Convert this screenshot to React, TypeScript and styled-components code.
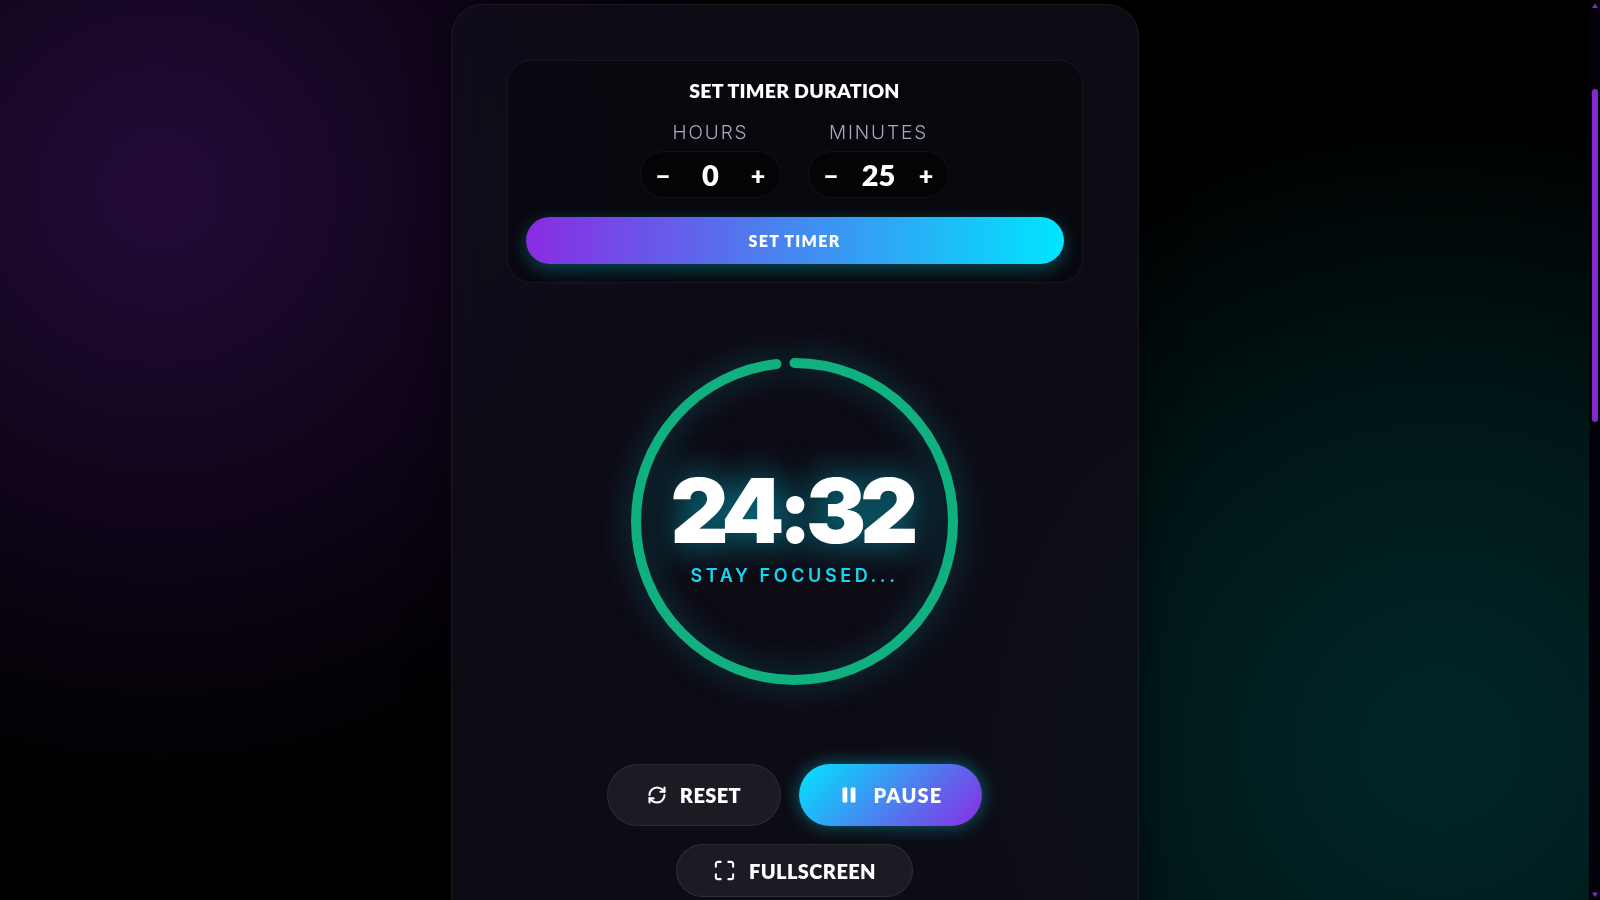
import React, { useLayoutEffect, useRef } from "react";
import styled, { createGlobalStyle } from "styled-components";
import { RefreshCw, Maximize } from "lucide-react";

const Global = createGlobalStyle`
  html, body { margin: 0; height: 100%; background: #000; overflow: hidden; }
  body { color: #fff; font-family: "Lato", "Inter", sans-serif; }
  #root { height: 100%; }
`;

const Backdrop = styled.div`
  position: fixed;
  inset: 0;
  z-index: 0;
  background:
    radial-gradient(circle at 10% 21%, rgba(138, 43, 226, 0.25), transparent 600px),
    radial-gradient(circle at 90% 83%, rgba(0, 229, 235, 0.17), rgba(0, 229, 235, 0.11) 300px, transparent 640px),
    #000;
`;

const Scroller = styled.div`
  position: relative;
  z-index: 1;
  height: 100vh;
  overflow-y: scroll;
  scrollbar-width: none;
`;

const Rail = styled.div`
  position: fixed;
  top: 0;
  right: 0;
  bottom: 0;
  z-index: 2;
  width: 11px;
  background: #030208;
  display: flex;
  flex-direction: column;
  align-items: center;
`;

const RailArrow = styled.svg`
  flex: none;
  display: block;
  width: 11px;
  height: 12px;
  fill: #8428d0;
`;

const RailTrack = styled.div`
  flex: 1;
  width: 100%;
`;

const RailThumb = styled.div`
  width: 6px;
  height: 333px;
  margin: 77px 2px 0 3px;
  border-radius: 3px;
  background: #8428d0;
`;

const Page = styled.main`
  display: flex;
  flex-direction: column;
  align-items: center;
  box-sizing: border-box;
  min-height: 2375px;
  padding: 213px 11px 0 0;
`;

const Card = styled.section`
  box-sizing: border-box;
  width: 688px;
  padding: 55px 55px 56px;
  border: 1px solid rgba(255, 255, 255, 0.06);
  border-radius: 32px;
  background: rgba(16, 14, 25, 0.8);
  backdrop-filter: blur(20px);
  box-shadow: 0 0 40px rgba(0, 0, 0, 0.5);
  display: flex;
  flex-direction: column;
  align-items: center;
`;

const Panel = styled.div`
  box-sizing: border-box;
  width: 100%;
  padding: 18px;
  border: 1px solid rgba(255, 255, 255, 0.06);
  border-radius: 24px;
  background: rgba(0, 0, 0, 0.32);
  display: flex;
  flex-direction: column;
  align-items: center;
`;

const Title = styled.h2`
  margin: 0;
  font-size: 19.5px;
  line-height: 24px;
  font-weight: 800;
  letter-spacing: 0.25px;
  color: #fff;
`;

const Fields = styled.div`
  display: flex;
  gap: 27px;
  margin-top: 19px;
`;

const Field = styled.div`
  display: flex;
  flex-direction: column;
  align-items: center;
  gap: 7px;
`;

const FieldLabel = styled.span`
  font-family: "Inter", sans-serif;
  font-size: 19px;
  line-height: 22px;
  font-weight: 300;
  letter-spacing: 1.9px;
  color: #aaa9b8;
`;

const Stepper = styled.div`
  box-sizing: border-box;
  width: 141px;
  height: 47px;
  padding: 0 8px;
  border: 1px solid rgba(255, 255, 255, 0.06);
  border-radius: 24px;
  background: rgba(0, 0, 0, 0.5);
  display: flex;
  align-items: center;
  justify-content: space-between;
`;

const StepButton = styled.span`
  width: 28px;
  text-align: center;
  font-size: 25px;
  line-height: 26px;
  font-weight: 800;
  color: #fff;
`;

const StepValue = styled.span`
  font-size: 29px;
  line-height: 36px;
  font-weight: 800;
  color: #fff;
`;

const SetButton = styled.div`
  width: 100%;
  height: 47px;
  margin-top: 19px;
  border-radius: 24px;
  background: linear-gradient(90deg, #8a2be2, #00e5ff);
  box-shadow: 0 5px 18px rgba(0, 229, 255, 0.3);
  display: flex;
  align-items: center;
  justify-content: center;
  font-size: 16px;
  font-weight: 800;
  letter-spacing: 1.3px;
  color: #fff;
`;

const RingWrap = styled.div`
  position: relative;
  width: 327px;
  height: 327px;
  margin-top: 75px;
`;

const RingSvg = styled.svg`
  display: block;
  width: 100%;
  height: 100%;
  overflow: visible;
  filter: drop-shadow(0 0 16px rgba(0, 229, 255, 0.32));
`;

const RingCenter = styled.div`
  position: absolute;
  inset: 0;
  display: flex;
  flex-direction: column;
  align-items: center;
  padding-top: 103px;
  box-sizing: border-box;
`;

const Time = styled.div`
  margin-right: 6px;
  font-family: "Inter", sans-serif;
  font-size: 90px;
  line-height: 100px;
  font-weight: 900;
  letter-spacing: -6px;
  color: #fff;
  text-shadow: 0 0 36px rgba(0, 229, 255, 0.6);
`;

const Status = styled.div`
  margin-top: 3px;
  font-family: "Inter", sans-serif;
  font-size: 18px;
  line-height: 24px;
  font-weight: 600;
  letter-spacing: 3.6px;
  color: #14d8f5;
`;

const Controls = styled.div`
  display: flex;
  flex-wrap: wrap;
  justify-content: center;
  gap: 18px;
  margin-top: 79px;
`;

const ControlButton = styled.div<{ $primary?: boolean; $w: number; $h: number }>`
  box-sizing: border-box;
  width: ${(p) => p.$w}px;
  height: ${(p) => p.$h}px;
  padding-left: ${(p) => (p.$primary ? "4px" : "0")};
  border-radius: 32px;
  display: flex;
  align-items: center;
  justify-content: center;
  gap: ${(p) => (p.$primary ? "17px" : "13px")};
  font-size: 20px;
  font-weight: 800;
  letter-spacing: ${(p) => (p.$primary ? "1.2px" : "0.4px")};
  color: #fff;
  border: ${(p) => (p.$primary ? "none" : "1px solid rgba(255, 255, 255, 0.08)")};
  background: ${(p) => (p.$primary ? "linear-gradient(135deg, #00e5ff, #8a2be2)" : "#1c1b23")};
  box-shadow: ${(p) => (p.$primary ? "0 0 18px rgba(0, 229, 255, 0.4)" : "none")};
`;

export default function App() {
  const scroller = useRef<HTMLDivElement>(null);
  useLayoutEffect(() => {
    if (scroller.current) scroller.current.scrollTop = 209;
  }, []);

  const r = 158.5;
  const c = 2 * Math.PI * r;
  const progress = (24 * 60 + 32) / (25 * 60);

  return (
    <>
      <Global />
      <Backdrop />
      <Scroller ref={scroller}>
        <Page>
          <Card>
            <Panel>
              <Title>SET TIMER DURATION</Title>
              <Fields>
                <Field>
                  <FieldLabel>HOURS</FieldLabel>
                  <Stepper>
                    <StepButton>−</StepButton>
                    <StepValue>0</StepValue>
                    <StepButton>+</StepButton>
                  </Stepper>
                </Field>
                <Field>
                  <FieldLabel>MINUTES</FieldLabel>
                  <Stepper>
                    <StepButton>−</StepButton>
                    <StepValue>25</StepValue>
                    <StepButton>+</StepButton>
                  </Stepper>
                </Field>
              </Fields>
              <SetButton>SET TIMER</SetButton>
            </Panel>
            <RingWrap>
              <RingSvg viewBox="0 0 327 327">
                <circle
                  cx="163.5"
                  cy="163.5"
                  r={r}
                  fill="none"
                  stroke="#10b07f"
                  strokeWidth="10"
                  strokeLinecap="round"
                  strokeDasharray={`${c * progress} ${c}`}
                  transform="rotate(-90 163.5 163.5)"
                />
              </RingSvg>
              <RingCenter>
                <Time>24:32</Time>
                <Status>STAY FOCUSED...</Status>
              </RingCenter>
            </RingWrap>
            <Controls>
              <ControlButton $w={174} $h={62}>
                <RefreshCw size={20} strokeWidth={2.5} />
                RESET
              </ControlButton>
              <ControlButton $primary $w={183} $h={62}>
                <svg width="14" height="16" viewBox="0 0 14 16" fill="#fff">
                  <rect x="0.5" y="0.5" width="4.8" height="15" rx="1" />
                  <rect x="8.7" y="0.5" width="4.8" height="15" rx="1" />
                </svg>
                PAUSE
              </ControlButton>
              <ControlButton $w={237} $h={53}>
                <Maximize size={23} strokeWidth={2.1} />
                FULLSCREEN
              </ControlButton>
            </Controls>
          </Card>
        </Page>
      </Scroller>
      <Rail>
        <RailArrow viewBox="0 0 11 12">
          <polygon points="6,3.5 9,8 3,8" />
        </RailArrow>
        <RailTrack>
          <RailThumb />
        </RailTrack>
        <RailArrow viewBox="0 0 11 12">
          <polygon points="3,4.5 9,4.5 6,9" />
        </RailArrow>
      </Rail>
    </>
  );
}
